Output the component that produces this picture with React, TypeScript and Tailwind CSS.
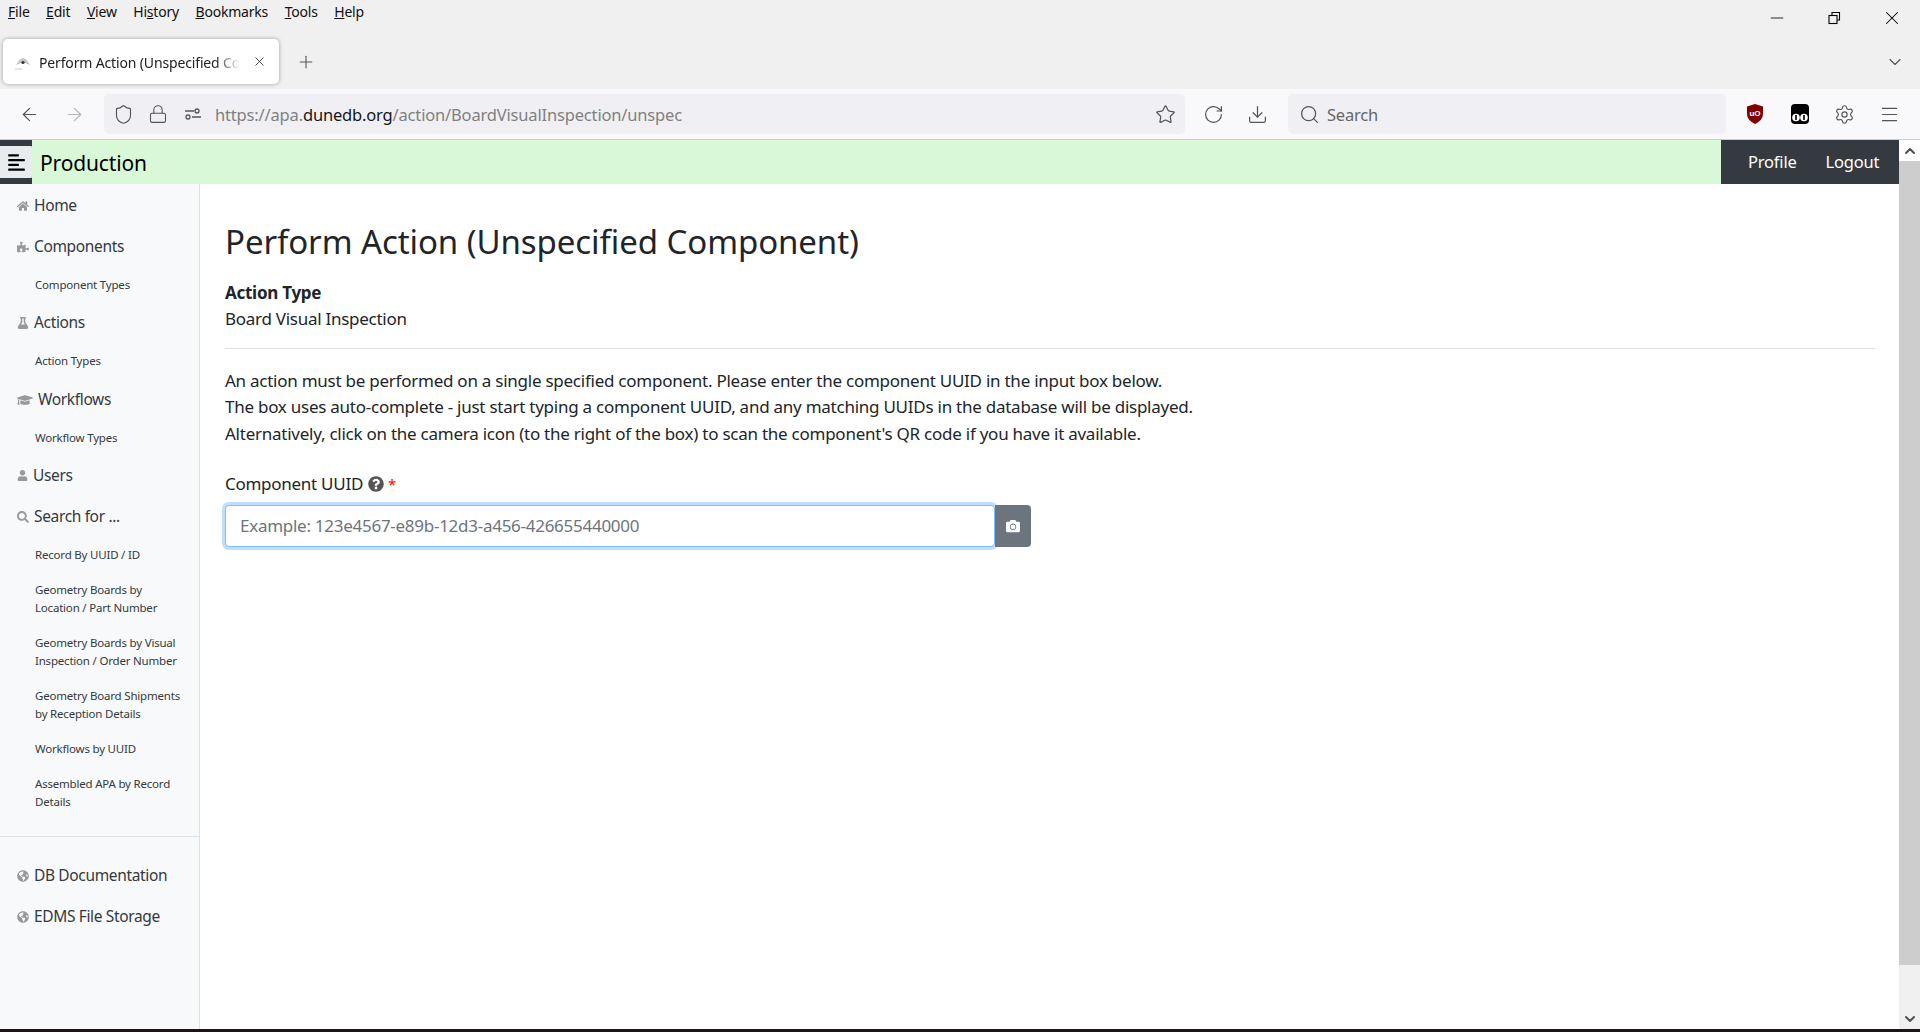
import { ArrowLeft, ArrowRight, ChevronDown, ChevronUp, Download, Lock, Menu, Minus, Plus, RotateCw, Search, Settings, Shield, Star, X } from "lucide-react";
import { FaAlignLeft, FaCamera, FaGlobeAmericas, FaGraduationCap, FaFlask, FaHome, FaPuzzlePiece, FaQuestionCircle, FaSearch, FaUser } from "react-icons/fa";

const font = "[font-family:'Noto_Sans',sans-serif]";

function MainItem({ icon, label }: { icon: React.ReactNode; label: string }) {
  return (
    <div className="flex h-[41px] items-center pl-[17px] text-[15.5px] text-[#343a40] tracking-[-0.35px]">
      <span className="mr-[5px] flex items-center text-[#999]">{icon}</span>
      {label}
    </div>
  );
}

function SubItem({ lines }: { lines: string[] }) {
  return (
    <div className={`flex flex-col justify-center pl-[35px] text-[11.5px] leading-[18px] text-[#343a40] tracking-[-0.2px] ${lines.length > 1 ? "h-[53px]" : "h-[35px]"}`}>
      {lines.map((l) => (
        <div key={l}>{l}</div>
      ))}
    </div>
  );
}

export default function App() {
  return (
    <div className={`flex h-[1032px] w-[1920px] flex-col overflow-hidden bg-white ${font}`}>
      {/* Browser chrome */}
      <div className="h-[89px] shrink-0 bg-[#f0f0f0]">
        <div className="flex h-[39px] items-start justify-between">
          <div className="flex gap-[16.5px] pl-[8px] pt-[1px] text-[14px] text-[#111] tracking-[-0.2px]">
            <span><u>F</u>ile</span>
            <span><u>E</u>dit</span>
            <span><u>V</u>iew</span>
            <span>Hi<u>s</u>tory</span>
            <span><u>B</u>ookmarks</span>
            <span><u>T</u>ools</span>
            <span><u>H</u>elp</span>
          </div>
          <div className="flex items-center gap-[37px] pr-[17px] pt-[7px] text-black">
            <Minus size={20} strokeWidth={1} />
            <svg width="20" height="20" viewBox="0 0 20 20" fill="none" stroke="black" strokeWidth="1.1">
              <rect x="5" y="7.5" width="8" height="8" />
              <path d="M8 7.5V4.5h7.5V12H13" />
            </svg>
            <X size={22} strokeWidth={1.1} />
          </div>
        </div>
        <div className="flex h-[50px] items-start justify-between pl-[3px] pr-[15px]">
          <div className="flex items-center">
            <div className="flex h-[45px] w-[276px] items-center rounded-[5px] bg-white pl-[11px] pr-[12px] text-[14px] text-[#222] shadow-[0_0_4px_rgba(0,0,0,0.35)]">
              <svg width="18" height="18" viewBox="0 0 18 18" className="shrink-0">
                <path d="M2 12 Q5 6 9 5 Q13 6 16 12 L11 10 H7 Z" fill="#c4c4c4" />
                <circle cx="9" cy="9.5" r="1.6" fill="#333" />
                <path d="M1 16h7" stroke="#ccc" strokeWidth="1" />
              </svg>
              <span className="ml-[7px] mt-[1px] whitespace-nowrap tracking-[-0.15px] [mask-image:linear-gradient(to_right,black_88%,transparent)]">
                Perform Action (Unspecified Co
              </span>
              <X size={15} strokeWidth={1.4} className="ml-auto shrink-0 text-[#333]" />
            </div>
            <Plus size={20} strokeWidth={1.3} className="ml-[17px] text-[#555]" />
          </div>
          <ChevronDown size={20} strokeWidth={1.4} className="mt-[13px] text-[#555]" />
        </div>
      </div>
      <div className="flex h-[51px] shrink-0 items-center border-b border-[#ccc] bg-[#f9f9fb] text-[#555]">
        <div className="flex w-[104px] items-center gap-[24px] pl-[19px]">
          <ArrowLeft size={21} strokeWidth={1.4} />
          <ArrowRight size={21} strokeWidth={1.4} className="text-[#b5b5b5]" />
        </div>
        <div className="flex h-[40px] w-[1081px] items-center rounded-[5px] bg-[#f0f0f4] pl-[9px] pr-[9px]">
          <Shield size={21} strokeWidth={1.3} />
          <Lock size={20} strokeWidth={1.3} className="ml-[14px]" />
          <svg width="20" height="20" viewBox="0 0 20 20" fill="none" stroke="#555" strokeWidth="1.3" className="ml-[15px]">
            <circle cx="5" cy="13" r="2" />
            <path d="M9 13h9M2 7h9" />
            <circle cx="14" cy="7" r="2" />
          </svg>
          <span className="ml-[12px] mt-[3px] text-[16.5px] tracking-[-0.17px] text-[#808080]">
            https://apa.<span className="text-[#15141a]">dunedb.org</span>/action/BoardVisualInspection/unspec
          </span>
          <Star size={21} strokeWidth={1.4} className="ml-auto" />
        </div>
        <RotateCw size={21} strokeWidth={1.4} className="ml-[18px]" />
        <Download size={21} strokeWidth={1.4} className="ml-[23px]" />
        <div className="ml-[20px] flex h-[40px] w-[438px] items-center rounded-[5px] bg-[#f0f0f4] pl-[11px]">
          <Search size={21} strokeWidth={1.4} />
          <span className="ml-[7px] mt-[3px] text-[16.5px] tracking-[-0.2px] text-[#666]">Search</span>
        </div>
        <svg width="20" height="22" viewBox="0 0 20 22" className="ml-[19px] shrink-0">
          <path d="M10 1 L18 3.5 V11 Q18 17 10 21 Q2 17 2 11 V3.5 Z" fill="#800000" />
          <text x="10" y="12.5" fontSize="8" fontWeight="700" fill="white" textAnchor="middle" fontFamily="Liberation Sans, sans-serif">uO</text>
        </svg>
        <svg width="20" height="22" viewBox="0 0 20 22" className="ml-[25px] shrink-0">
          <rect x="1" y="1" width="18" height="20" rx="4" fill="black" />
          <circle cx="6" cy="14.5" r="3.8" fill="white" />
          <circle cx="14" cy="14.5" r="3.8" fill="white" />
          <path d="M6 12v5M14 12v5" stroke="black" strokeWidth="1.6" />
        </svg>
        <Settings size={21} strokeWidth={1.3} className="ml-[24px]" />
        <Menu size={21} strokeWidth={1.4} className="ml-[24px]" />
      </div>

      {/* Page */}
      <div className="flex min-h-0 flex-1">
        <div className="flex min-w-0 flex-1 flex-col">
          {/* Navbar */}
          <div className="flex h-[44px] shrink-0 bg-[#d8f8d8]">
            <div className="flex h-[44px] w-[32px] items-center bg-[#343a40]">
              <div className="flex h-[32px] w-[32px] items-center justify-center rounded-r-[1px] bg-[#e9ecef] text-black">
                <FaAlignLeft size={19} />
              </div>
            </div>
            <div className="ml-[8px] mt-[3px] flex items-center text-[21px] tracking-[-0.15px] text-black">Production</div>
            <div className="ml-auto flex w-[178px] items-center gap-[29px] bg-[#343a40] pl-[27px] text-[16.5px] tracking-[-0.2px] text-white">
              <span>Profile</span>
              <span>Logout</span>
            </div>
          </div>
          <div className="flex min-h-0 flex-1">
            {/* Sidebar */}
            <div className="w-[200px] shrink-0 border-r border-[#dee2e6] bg-[#f8f9fa] pt-[1px]">
              <MainItem icon={<FaHome size={12} />} label="Home" />
              <MainItem icon={<FaPuzzlePiece size={12} />} label="Components" />
              <SubItem lines={["Component Types"]} />
              <MainItem icon={<FaFlask size={12} />} label="Actions" />
              <SubItem lines={["Action Types"]} />
              <div className="mt-[1px]">
                <MainItem icon={<FaGraduationCap size={16} />} label="Workflows" />
              </div>
              <SubItem lines={["Workflow Types"]} />
              <MainItem icon={<FaUser size={11} />} label="Users" />
              <MainItem icon={<FaSearch size={12} />} label="Search for ..." />
              <SubItem lines={["Record By UUID / ID"]} />
              <SubItem lines={["Geometry Boards by", "Location / Part Number"]} />
              <SubItem lines={["Geometry Boards by Visual", "Inspection / Order Number"]} />
              <SubItem lines={["Geometry Board Shipments", "by Reception Details"]} />
              <SubItem lines={["Workflows by UUID"]} />
              <SubItem lines={["Assembled APA by Record", "Details"]} />
              <div className="mb-[18px] mt-[17px] border-t border-[#dee2e6]" />
              <MainItem icon={<FaGlobeAmericas size={12} />} label="DB Documentation" />
              <MainItem icon={<FaGlobeAmericas size={12} />} label="EDMS File Storage" />
            </div>
            {/* Content */}
            <div className="min-w-0 flex-1 pl-[25px] pr-[24px] pt-[32.5px] text-[17px] text-[#212529]">
              <h1 className="text-[33px] leading-[50px] tracking-[-0.08px]">Perform Action (Unspecified Component)</h1>
              <div className="mt-[13px] font-bold leading-[26px] tracking-[-0.27px]">Action Type</div>
              <div className="leading-[26px] tracking-[-0.27px]">Board Visual Inspection</div>
              <div className="mt-[16px] border-t border-[#dfdfdf]" />
              <div className="mt-[19px] leading-[26.5px] tracking-[-0.25px]">
                <div>An action must be performed on a single specified component. Please enter the component UUID in the input box below.</div>
                <div>The box uses auto-complete - just start typing a component UUID, and any matching UUIDs in the database will be displayed.</div>
                <div>Alternatively, click on the camera icon (to the right of the box) to scan the component's QR code if you have it available.</div>
              </div>
              <div className="mt-[24px] flex items-center tracking-[-0.27px]">
                Component UUID
                <FaQuestionCircle size={16} className="ml-[5px] text-[#555]" />
                <span className="ml-[4px] text-[15px] text-[#ff0000]">*</span>
              </div>
              <div className="mt-[8px] flex w-[806px] items-stretch">
                <div className="flex h-[42px] w-[770px] items-center rounded-[4px] border border-[#80bdff] bg-white pl-[14px] text-[#6c757d] shadow-[0_0_0_3px_#bfdeff] tracking-[-0.27px]">
                  Example: 123e4567-e89b-12d3-a456-426655440000
                </div>
                <div className="flex w-[36px] items-center justify-center rounded-r-[4px] bg-[#6c757d] text-white">
                  <FaCamera size={14} />
                </div>
              </div>
            </div>
          </div>
        </div>
        {/* Scrollbar */}
        <div className="flex w-[21px] shrink-0 flex-col bg-[#f0f0f0]">
          <div className="flex h-[21px] shrink-0 items-center justify-center bg-white">
            <ChevronUp size={16} strokeWidth={3} className="text-[#505050]" />
          </div>
          <div className="h-[804px] shrink-0 bg-[#cdcdcd]" />
          <div className="flex-1" />
          <div className="flex h-[21px] shrink-0 items-center justify-center">
            <ChevronDown size={16} strokeWidth={3} className="text-[#505050]" />
          </div>
        </div>
      </div>
      <div className="h-[3px] shrink-0 bg-[#1c1416]" />
    </div>
  );
}
